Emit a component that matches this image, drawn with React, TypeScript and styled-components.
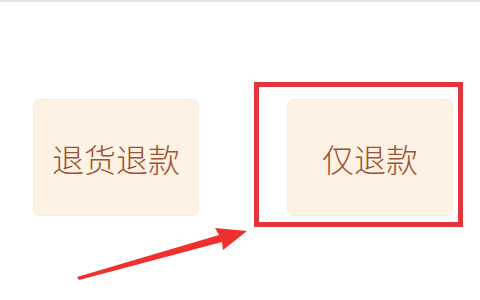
import styled, { createGlobalStyle } from "styled-components";

const Global = createGlobalStyle`
  html, body {
    margin: 0;
    padding: 0;
    background: #ffffff;
  }
`;

const Page = styled.div`
  position: relative;
  width: 480px;
  height: 300px;
  overflow: hidden;
  border-top: 2px solid #e2e2e2;
  box-sizing: border-box;
  background: #ffffff;
`;

const Options = styled.div`
  display: flex;
  align-items: flex-start;
  gap: 88px;
  padding: 97px 0 0 33px;
`;

const OptionWrap = styled.div`
  position: relative;
`;

const Option = styled.div`
  display: flex;
  align-items: center;
  justify-content: center;
  width: 166px;
  height: 117px;
  box-sizing: border-box;
  background: #fdf2e3;
  border: 1px solid #f8ead8;
  border-radius: 7px;
  font-family: "Noto Sans CJK SC", "Noto Sans", sans-serif;
  font-size: 32px;
  font-weight: 300;
  color: #9e5234;
`;

const Highlight = styled.div`
  position: absolute;
  left: -33px;
  top: -17px;
  right: -10px;
  bottom: -11px;
  border: 5px solid #e2363c;
  pointer-events: none;
`;

const Arrow = styled.svg`
  position: absolute;
  left: 0;
  top: 0;
  width: 480px;
  height: 300px;
  pointer-events: none;
`;

export default function App() {
  return (
    <>
      <Global />
      <Page>
        <Options>
          <Option>退货退款</Option>
          <OptionWrap>
            <Option>仅退款</Option>
            <Highlight />
          </OptionWrap>
        </Options>
        <Arrow viewBox="0 0 480 300">
          <polygon
            points="77,275 219,233 215,226 247,229 223,248 222,240 79,278"
            fill="#f0302f"
          />
        </Arrow>
      </Page>
    </>
  );
}
